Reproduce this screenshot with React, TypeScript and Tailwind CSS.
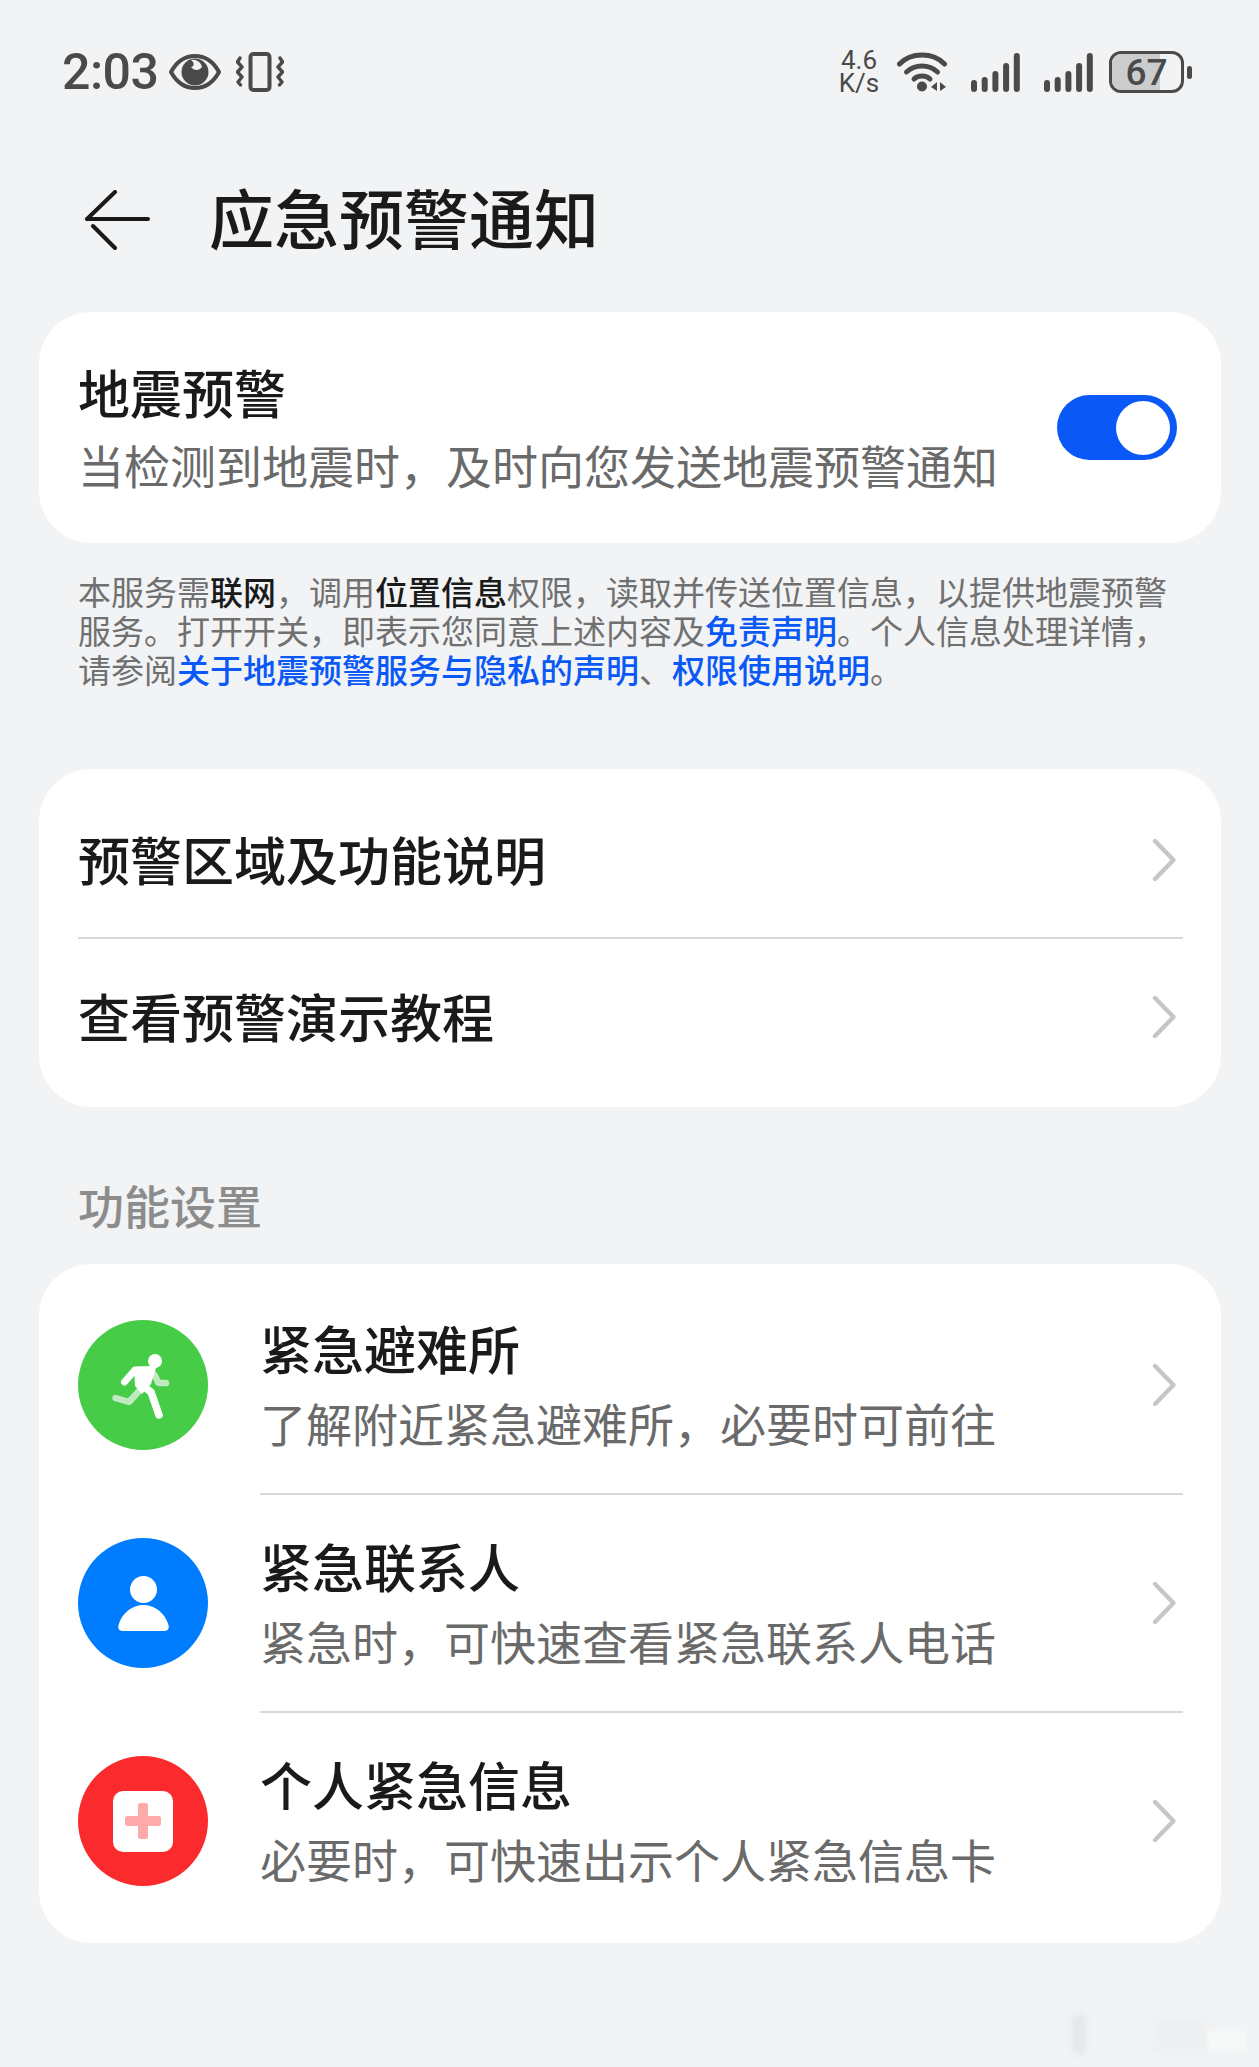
import React from "react";

const CJK = { fontFamily: '"Noto Sans CJK SC", "Noto Sans", sans-serif' };

function Chevron() {
  return (
    <svg width="26" height="46" viewBox="0 0 26 46" className="shrink-0" fill="none">
      <path d="M4 4 L22.5 23 L4 42" stroke="#c6c6c6" strokeWidth="4.4" strokeLinecap="round" strokeLinejoin="round" />
    </svg>
  );
}

function Eye() {
  return (
    <svg width="52" height="36" viewBox="0 0 52 36" fill="none">
      <path d="M2 18 C8 7 17 2 26 2 C35 2 44 7 50 18 C44 29 35 34 26 34 C17 34 8 29 2 18 Z" stroke="#4a4a4a" strokeWidth="4" strokeLinejoin="round" />
      <circle cx="26" cy="18" r="13.5" fill="#4a4a4a" />
      <path d="M22 6 C27 5 32 8 33 13 C30 17 25 17 22 13 C25 13 26 9 22 6 Z" fill="#f1f3f5" />
    </svg>
  );
}

function Vibrate() {
  return (
    <svg width="48" height="40" viewBox="0 0 48 40" fill="none" stroke="#4a4a4a" strokeLinecap="round" strokeLinejoin="round">
      <rect x="14.5" y="2" width="19" height="36" rx="3" strokeWidth="4" />
      <path d="M4 6 L1.5 10 L6 15 L1.5 20 L6 25 L2 30 L4.5 33" strokeWidth="3.4" />
      <path d="M44 6 L46.5 10 L42 15 L46.5 20 L42 25 L46 30 L43.5 33" strokeWidth="3.4" />
    </svg>
  );
}

function Wifi() {
  return (
    <svg width="50" height="40" viewBox="0 0 50 40" fill="none">
      <path d="M2.5 12 C14 0 36 0 47.5 12" stroke="#4a4a4a" strokeWidth="5" strokeLinecap="round" />
      <path d="M9.5 20 C18 12 32 12 40.5 20" stroke="#4a4a4a" strokeWidth="5" strokeLinecap="round" />
      <path d="M17 27 C21 23 29 23 33 27" stroke="#4a4a4a" strokeWidth="5" strokeLinecap="round" />
      <circle cx="25" cy="34.5" r="5" fill="#4a4a4a" />
      <path d="M40 30 L40 39 L34 35 Z" fill="#4a4a4a" />
      <path d="M43 30 L43 39 L49 35 Z" fill="#4a4a4a" />
    </svg>
  );
}

function Signal() {
  const bars = [
    [0, 27, 12],
    [10.7, 24, 15],
    [21.4, 18, 21],
    [32.1, 10, 29],
    [42.8, 0, 39],
  ];
  return (
    <svg width="49" height="39" viewBox="0 0 49 39" fill="#4a4a4a">
      {bars.map(([x, y, h]) => (
        <rect key={x} x={x} y={y} width="6" height={h} rx="3" />
      ))}
    </svg>
  );
}

function Battery() {
  return (
    <div className="flex items-center gap-[3px]">
      <div className="relative flex h-[42px] w-[75px] items-center justify-center overflow-hidden rounded-[12px] border-[3px] border-[#4a4a4a]">
        <div className="absolute inset-y-0 left-0 w-[70%] bg-[#cbcccd]" />
        <span className="relative text-[37px] leading-none font-medium text-[#4a4a4a]" style={{ fontFamily: "Roboto, sans-serif" }}>67</span>
      </div>
      <div className="h-[13px] w-[5px] rounded-full bg-[#4a4a4a]" />
    </div>
  );
}

function StatusBar() {
  return (
    <div className="flex h-[144px] items-center justify-between pl-[62px] pr-[67px]">
      <div className="flex items-center">
        <span className="text-[50px] leading-none tracking-[-0.5px] text-[#4a4a4a]" style={{ fontFamily: "Roboto, sans-serif", fontWeight: 500 }}>2:03</span>
        <div className="ml-[11px] flex"><Eye /></div>
        <div className="ml-[15px] flex"><Vibrate /></div>
      </div>
      <div className="flex items-center">
        <div className="flex w-[38px] flex-col items-center text-[26px] leading-[23px] text-[#4a4a4a]" style={{ fontFamily: "Roboto, sans-serif" }}>
          <span>4.6</span>
          <span>K/s</span>
        </div>
        <div className="ml-[19px] flex"><Wifi /></div>
        <div className="ml-[24px] flex"><Signal /></div>
        <div className="ml-[24px] flex"><Signal /></div>
        <div className="ml-[16px] flex"><Battery /></div>
      </div>
    </div>
  );
}

function Header() {
  return (
    <div className="mb-[16px] flex h-[152px] items-center pl-[84px]">
      <svg width="66" height="60" viewBox="0 0 66 60" fill="none" stroke="#1a1a1a" strokeWidth="4" strokeLinecap="round" strokeLinejoin="round">
        <path d="M64 29 L4 29" />
        <path d="M31 2 L3 29" />
        <path d="M9 36 L31 58" />
      </svg>
      <h1 className="mt-[-7px] ml-[59px] text-[65px] leading-none font-medium text-[#1a1a1a]">应急预警通知</h1>
    </div>
  );
}

function Runner() {
  return (
    <svg width="70" height="70" viewBox="0 0 70 70" fill="none" strokeLinecap="round" strokeLinejoin="round">
      <path d="M7.5 48 L21 52 L31 41" stroke="#bfeabf" strokeWidth="6.5" />
      <path d="M46.5 25 L50.5 33 L58 33" stroke="#bfeabf" strokeWidth="6.5" />
      <circle cx="47" cy="11" r="7" fill="#fff" />
      <path d="M16.5 32 L27 20 L44 19.5" stroke="#fff" strokeWidth="7" />
      <path d="M26 18 L48 17 L43 34 L34 44 L27 36 Z" fill="#fff" />
      <path d="M35 36 L43 42 L51 65" stroke="#fff" strokeWidth="7.5" />
    </svg>
  );
}

function Person() {
  return (
    <svg width="51" height="55" viewBox="0 0 51 55" fill="#fff">
      <circle cx="25.5" cy="13.5" r="13.5" />
      <path d="M4 55 C1 55 -0.5 52 0.5 49 C4 37 14 29 25.5 29 C37 29 47 37 50.5 49 C51.5 52 50 55 47 55 Z" />
    </svg>
  );
}

function Medical() {
  return (
    <div className="flex h-[61px] w-[60px] items-center justify-center rounded-[10px] bg-white">
      <svg width="36" height="36" viewBox="0 0 36 36" fill="#ffa9ab">
        <rect x="13" y="0" width="10" height="36" rx="2.5" />
        <rect x="0" y="13" width="36" height="10" rx="2.5" />
      </svg>
    </div>
  );
}

function NavRow({ title, h, pad, divider }: { title: string; h: string; pad: string; divider?: boolean }) {
  return (
    <div className={`relative flex items-center justify-between pl-[39px] pr-[44px] ${h} ${pad}`}>
      <span className="mt-[-3px] text-[52px] leading-none font-medium text-[#1a1a1a]">{title}</span>
      <Chevron />
      {divider && <div className="absolute bottom-0 left-[39px] right-[38px] h-[2px] bg-[#d8d8d8]" />}
    </div>
  );
}

function FeatureRow({
  color, icon, title, sub, h, pad, divider,
}: { color: string; icon: React.ReactNode; title: string; sub: string; h: string; pad: string; divider?: boolean }) {
  return (
    <div className={`relative flex items-center pl-[39px] pr-[44px] ${h} ${pad}`}>
      <div className={`flex h-[130px] w-[130px] shrink-0 items-center justify-center rounded-full ${color}`}>{icon}</div>
      <div className="ml-[52px] flex flex-1 flex-col">
        <span className="text-[52px] leading-[74px] font-medium text-[#1a1a1a]">{title}</span>
        <span className="text-[46px] leading-[74px] text-[#6a6a6a]">{sub}</span>
      </div>
      <Chevron />
      {divider && <div className="absolute bottom-0 left-[221px] right-[38px] h-[2px] bg-[#d8d8d8]" />}
    </div>
  );
}

export default function App() {
  return (
    <div className="relative h-[2067px] w-[1259px] overflow-hidden bg-[#f1f3f5]" style={CJK}>
      <StatusBar />
      <Header />

      <div className="ml-[39px] mr-[38px] flex h-[231px] items-center justify-between rounded-[52px] bg-white pl-[39px] pr-[44px]">
        <div className="flex flex-col">
          <span className="text-[52px] leading-[74px] font-medium text-[#1a1a1a]">地震预警</span>
          <span className="mt-[-2px] text-[46px] leading-[74px] text-[#6a6a6a]">当检测到地震时，及时向您发送地震预警通知</span>
        </div>
        <div className="flex h-[65px] w-[120px] items-center justify-end rounded-full bg-[#0a59f7] pr-[7px]">
          <div className="h-[54px] w-[54px] rounded-full bg-white" />
        </div>
      </div>

      <p className="mt-[29px] mr-[78px] mb-[80px] ml-[78px] text-[33px] leading-[39px] text-[#707070]">
        本服务需<b className="font-medium text-[#1a1a1a]">联网</b>，调用<b className="font-medium text-[#1a1a1a]">位置信息</b>权限，读取并传送位置信息，以提供地震预警服务。打开开关，即表示您同意上述内容及<span className="font-medium text-[#0a59f7]">免责声明</span>。个人信息处理详情，请参阅<span className="font-medium text-[#0a59f7]">关于地震预警服务与隐私的声明</span>、<span className="font-medium text-[#0a59f7]">权限使用说明</span>。
      </p>

      <div className="ml-[39px] mr-[38px] rounded-[52px] bg-white">
        <NavRow title="预警区域及功能说明" h="h-[170px]" pad="pt-[12px]" divider />
        <NavRow title="查看预警演示教程" h="h-[168px]" pad="pb-[12px]" />
      </div>

      <div className="flex h-[157px] items-center pt-[37px] pl-[78px] text-[46px] leading-none font-medium text-[#8c8c8c]">功能设置</div>

      <div className="ml-[39px] mr-[38px] rounded-[52px] bg-white">
        <FeatureRow color="bg-[#47cc47]" icon={<Runner />} title="紧急避难所" sub="了解附近紧急避难所，必要时可前往" h="h-[231px]" pad="pt-[11px]" divider />
        <FeatureRow color="bg-[#007dff]" icon={<Person />} title="紧急联系人" sub="紧急时，可快速查看紧急联系人电话" h="h-[218px]" pad="pb-[2px]" divider />
        <FeatureRow color="bg-[#fa2a2d]" icon={<Medical />} title="个人紧急信息" sub="必要时，可快速出示个人紧急信息卡" h="h-[230px]" pad="pb-[14px]" />
      </div>

      <div className="absolute top-[2014px] left-[1072px] h-[40px] w-[14px] rounded-sm bg-[#d8dadc] opacity-50 blur-[3px]" />
      <div className="absolute top-[2016px] left-[1150px] h-[36px] w-[60px] bg-[#e8eaec] opacity-40 blur-[3px]" />
      <div className="absolute top-[2031px] left-[1208px] h-[19px] w-[38px] bg-[#f7f8f8] blur-[1px]" />
    </div>
  );
}
